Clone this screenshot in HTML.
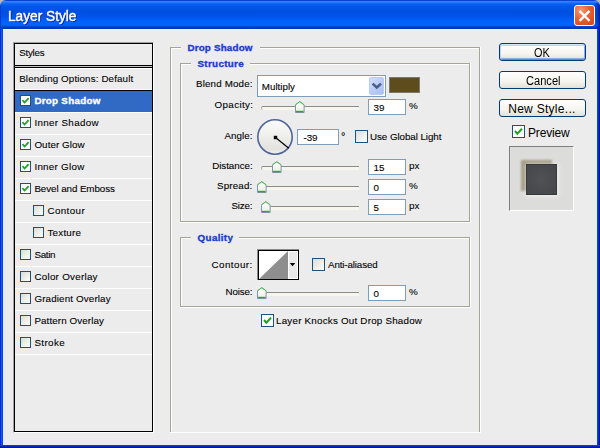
<!DOCTYPE html>
<html><head><meta charset="utf-8">
<style>
*{box-sizing:border-box;margin:0;padding:0}
html,body{width:600px;height:448px;overflow:hidden;background:#ECECEC}
body{position:relative;font-family:"Liberation Sans",sans-serif;font-size:9.8px;color:#000}
.a{position:absolute}
.t{position:absolute;white-space:pre;line-height:12px;-webkit-text-stroke:0.1px currentColor}
#titlebar{left:0;top:0;width:600px;height:29px;border-radius:6px 6px 0 0;
 background:linear-gradient(to bottom,#0B3FD6 0,#0B3FD6 1px,#3C8DFF 1px,#2A7BFF 2px,#1066F5 3.5px,#0058EA 6px,#004FE0 11px,#0052E6 16px,#005EF8 20px,#0066FF 25px,#0054E6 26px,#0040C8 27px,#0030A8 29px)}
#lframe{left:0;top:29px;width:3px;height:419px;background:linear-gradient(to right,#0024D0 0,#0024D0 1px,#0A5EFA 1px,#0A5EFA 2px,#0046EC 2px)}
#rframe{left:597px;top:29px;width:3px;height:419px;background:linear-gradient(to right,#0046F0 0,#0046F0 1px,#002CC0 1px,#002CC0 2px,#00168A 2px)}
#bframe{left:0;top:445px;width:600px;height:3px;background:linear-gradient(to bottom,#0048FF 0,#0030D8 1px,#001E98 2px,#001A80 3px)}
#close{left:574px;top:5px;width:21px;height:21px;border:1px solid #fff;border-radius:3px;
 background:radial-gradient(circle at 30% 25%,#F59A78 0,#E5602F 45%,#D4461A 100%)}
#list{left:13px;top:42px;width:141px;height:391px;border-top:1px solid #A0A0A0;border-left:1px solid #A0A0A0;border-right:1px solid #fff;border-bottom:1px solid #fff}
#listin{left:14px;top:43px;width:139px;height:389px;border:1px solid #000;background:#ECECEC}
.row{position:absolute;left:15px;width:137px;height:22px;border-bottom:1px solid #fff}
.sel{background:#316AC5;border-bottom:1px solid #fff}
.cb{position:absolute;width:11px;height:11px;border:1px solid #1C5180;background:linear-gradient(135deg,#DCDCD7 0,#F4F4F0 70%,#fff 100%)}
.cb13{width:13px;height:13px}
.chk{position:absolute;left:0;top:0}
.gl{position:absolute;background:#A5A497}
.gw{position:absolute;background:#fff}
.gt{font-weight:bold;color:#1A3CCF;-webkit-text-stroke:0.35px currentColor!important}
.fld{position:absolute;width:38px;height:16px;border:1px solid #7F9DB9;background:#fff}
.track{position:absolute;height:4px;width:98px;border-top:1px solid #8E8D85;border-left:1px solid #A9A89F;background:#F6F5EE;border-radius:3px 0 0 3px}
.btn{position:absolute;left:499px;width:87px;height:18px;border:1px solid #003C74;border-radius:3px;background:linear-gradient(#FFFFFF,#F5F4EE 60%,#E3E1D6)}
</style></head><body>
<div class="a" style="left:0;top:0;width:600px;height:8px;background:#B8B8B4"></div><div class="a" id="titlebar"></div><div class="a" style="left:594px;top:3px;width:6px;height:26px;background:linear-gradient(to right,rgba(0,40,200,0),rgba(0,45,190,0.6) 50%,#00209A);border-top-right-radius:4px"></div><div class="a" style="left:0;top:5px;width:3px;height:24px;background:linear-gradient(to right,#0A2FC0,rgba(0,80,240,0.3) 1.5px,rgba(0,80,240,0))"></div><div class="a" style="left:3px;top:29px;width:594px;height:1px;background:#F7F4EC"></div><div class="a" id="lframe"></div><div class="a" id="rframe"></div><div class="a" id="bframe"></div>
<div id="title" class="t " style="left:8.20px;top:8px;letter-spacing:0.000px;transform:scaleX(0.9776);transform-origin:0 0;font-weight:normal;font-size:14px;color:#fff;text-shadow:1px 1px 0 #0A1E8C;line-height:16px;-webkit-text-stroke:0.4px #fff">Layer Style</div>
<div class="a" id="close"><svg width="19" height="19" style="position:absolute;left:0;top:0"><path d="M5.4 5.8 L13.6 14 M13.6 5.8 L5.4 14" stroke="#fff" stroke-width="2.4" stroke-linecap="square"/></svg></div>
<div class="a" id="list"></div><div class="a" id="listin"></div>
<div class="row" style="top:44px;height:22px;border-bottom:1px solid #000"></div>
<div id="styles" class="t " style="left:19.20px;top:47px;letter-spacing:-0.240px;">Styles</div>
<div class="a" style="left:15px;top:66px;width:137px;height:1px;background:#C4C4C4"></div>
<div class="row" style="top:67px;height:24px;border-top:1px solid #000;border-bottom:1px solid #000;box-shadow:inset 0 1px 0 #fff, inset 0 -1px 0 #fff"></div>
<div id="blend" class="t " style="left:19.20px;top:73px;letter-spacing:0.119px;">Blending Options: Default</div>
<div class="row sel" style="top:91px"></div>
<div class="cb" style="left:20px;top:95px;background:#fff;"><svg class="chk" width="9" height="9" viewBox="0 0 9 9"><path d="M1.5 4.2 L3.6 6.5 L7.6 2.2" fill="none" stroke="#21A121" stroke-width="1.8"/></svg></div>
<div id="row0" class="t " style="left:34.40px;top:95px;letter-spacing:0.280px;font-weight:bold;color:#fff;-webkit-text-stroke:0.35px #fff;">Drop Shadow</div>
<div class="row" style="top:113px"></div>
<div class="cb" style="left:20px;top:117px;background:#fff;"><svg class="chk" width="9" height="9" viewBox="0 0 9 9"><path d="M1.5 4.2 L3.6 6.5 L7.6 2.2" fill="none" stroke="#21A121" stroke-width="1.8"/></svg></div>
<div id="row1" class="t " style="left:34.40px;top:117px;letter-spacing:0.339px;">Inner Shadow</div>
<div class="row" style="top:135px"></div>
<div class="cb" style="left:20px;top:139px;background:#fff;"><svg class="chk" width="9" height="9" viewBox="0 0 9 9"><path d="M1.5 4.2 L3.6 6.5 L7.6 2.2" fill="none" stroke="#21A121" stroke-width="1.8"/></svg></div>
<div id="row2" class="t " style="left:34.40px;top:139px;letter-spacing:0.083px;">Outer Glow</div>
<div class="row" style="top:157px"></div>
<div class="cb" style="left:20px;top:161px;background:#fff;"><svg class="chk" width="9" height="9" viewBox="0 0 9 9"><path d="M1.5 4.2 L3.6 6.5 L7.6 2.2" fill="none" stroke="#21A121" stroke-width="1.8"/></svg></div>
<div id="row3" class="t " style="left:34.40px;top:161px;letter-spacing:0.276px;">Inner Glow</div>
<div class="row" style="top:179px"></div>
<div class="cb" style="left:20px;top:183px;background:#fff;"><svg class="chk" width="9" height="9" viewBox="0 0 9 9"><path d="M1.5 4.2 L3.6 6.5 L7.6 2.2" fill="none" stroke="#21A121" stroke-width="1.8"/></svg></div>
<div id="row4" class="t " style="left:34.40px;top:183px;letter-spacing:-0.077px;">Bevel and Emboss</div>
<div class="row" style="top:201px"></div>
<div class="cb" style="left:33px;top:205px;"></div>
<div id="row5" class="t " style="left:47.40px;top:205px;letter-spacing:0.416px;">Contour</div>
<div class="row" style="top:223px"></div>
<div class="cb" style="left:33px;top:227px;"></div>
<div id="row6" class="t " style="left:47.40px;top:227px;letter-spacing:0.251px;">Texture</div>
<div class="row" style="top:245px"></div>
<div class="cb" style="left:20px;top:249px;"></div>
<div id="row7" class="t " style="left:34.40px;top:249px;letter-spacing:-0.300px;">Satin</div>
<div class="row" style="top:267px"></div>
<div class="cb" style="left:20px;top:271px;"></div>
<div id="row8" class="t " style="left:34.40px;top:271px;letter-spacing:0.270px;">Color Overlay</div>
<div class="row" style="top:289px"></div>
<div class="cb" style="left:20px;top:293px;"></div>
<div id="row9" class="t " style="left:34.40px;top:293px;letter-spacing:0.144px;">Gradient Overlay</div>
<div class="row" style="top:311px"></div>
<div class="cb" style="left:20px;top:315px;"></div>
<div id="row10" class="t " style="left:34.40px;top:315px;letter-spacing:0.105px;">Pattern Overlay</div>
<div class="row" style="top:333px"></div>
<div class="cb" style="left:20px;top:337px;"></div>
<div id="row11" class="t " style="left:34.40px;top:337px;letter-spacing:0.400px;">Stroke</div>
<div class="gl" style="left:170px;top:47px;width:11px;height:1px"></div>
<div class="gw" style="left:171px;top:48px;width:10px;height:1px"></div>
<div class="gl" style="left:260px;top:47px;width:220px;height:1px"></div>
<div class="gw" style="left:260px;top:48px;width:219px;height:1px"></div>
<div class="gl" style="left:170px;top:47px;width:1px;height:385px"></div>
<div class="gw" style="left:171px;top:48px;width:1px;height:383px"></div>
<div class="gl" style="left:479px;top:47px;width:1px;height:385px"></div>
<div class="gw" style="left:480px;top:47px;width:1px;height:386px"></div>
<div class="gw" style="left:170px;top:432px;width:311px;height:1px"></div>
<div class="gl" style="left:180px;top:63px;width:11px;height:1px"></div>
<div class="gw" style="left:181px;top:64px;width:10px;height:1px"></div>
<div class="gl" style="left:250px;top:63px;width:220px;height:1px"></div>
<div class="gw" style="left:250px;top:64px;width:219px;height:1px"></div>
<div class="gl" style="left:180px;top:63px;width:1px;height:159px"></div>
<div class="gw" style="left:181px;top:64px;width:1px;height:157px"></div>
<div class="gl" style="left:469px;top:63px;width:1px;height:159px"></div>
<div class="gw" style="left:470px;top:63px;width:1px;height:160px"></div>
<div class="gl" style="left:180px;top:221px;width:290px;height:1px"></div>
<div class="gw" style="left:180px;top:222px;width:291px;height:1px"></div>
<div class="gl" style="left:180px;top:237px;width:11px;height:1px"></div>
<div class="gw" style="left:181px;top:238px;width:10px;height:1px"></div>
<div class="gl" style="left:239px;top:237px;width:231px;height:1px"></div>
<div class="gw" style="left:239px;top:238px;width:230px;height:1px"></div>
<div class="gl" style="left:180px;top:237px;width:1px;height:70px"></div>
<div class="gw" style="left:181px;top:238px;width:1px;height:68px"></div>
<div class="gl" style="left:469px;top:237px;width:1px;height:70px"></div>
<div class="gw" style="left:470px;top:237px;width:1px;height:71px"></div>
<div class="gl" style="left:180px;top:306px;width:290px;height:1px"></div>
<div class="gw" style="left:180px;top:307px;width:291px;height:1px"></div>
<div id="g1" class="t gt" style="left:187.40px;top:42px;letter-spacing:0.190px;">Drop Shadow</div>
<div id="g2" class="t gt" style="left:197.50px;top:58px;letter-spacing:0.321px;">Structure</div>
<div id="g3" class="t gt" style="left:197.60px;top:232px;letter-spacing:0.348px;">Quality</div>
<div id="l1" class="t " style="left:196.00px;top:78px;letter-spacing:0.150px;">Blend Mode:</div>
<div id="l2" class="t " style="left:214.60px;top:99px;letter-spacing:0.346px;">Opacity:</div>
<div id="l3" class="t " style="left:224.40px;top:130px;letter-spacing:0.080px;">Angle:</div>
<div id="l4" class="t " style="left:212.20px;top:160px;letter-spacing:-0.050px;">Distance:</div>
<div id="l5" class="t " style="left:217.00px;top:180px;letter-spacing:0.167px;">Spread:</div>
<div id="l6" class="t " style="left:231.40px;top:200px;letter-spacing:-0.150px;">Size:</div>
<div id="l7" class="t " style="left:211.60px;top:259px;letter-spacing:0.428px;">Contour:</div>
<div id="l8" class="t " style="left:225.60px;top:286px;letter-spacing:-0.180px;">Noise:</div>
<div class="a" style="left:257px;top:75px;width:129px;height:22px;border:1px solid #7F9DB9;background:#fff"></div>
<div id="mult" class="t " style="left:261.80px;top:81px;letter-spacing:0.000px;">Multiply</div>
<div class="a" style="left:369px;top:77px;width:15px;height:18px;border-radius:2px;background:linear-gradient(135deg,#D2DEFD,#B6C9F7 60%,#A9BEF2);border:1px solid #B8CBF5"></div>
<svg class="a" style="left:372px;top:82px" width="11" height="9"><path d="M0.6 1.6 L4.8 5.5 L9 1.6" fill="none" stroke="#4A5E86" stroke-width="2.5"/></svg>
<div class="a" style="left:389px;top:77px;width:31px;height:16px;border:1px solid #7A7A70;background:#5E4C1D"></div>
<div class="fld" style="left:368px;top:99px;width:38px"></div>
<div id="fv1" class="t " style="left:373.60px;top:102px;letter-spacing:0.000px;">39</div>
<div id="fu1" class="t " style="left:409.00px;top:100px;letter-spacing:0.000px;">%</div>
<div class="fld" style="left:368px;top:159px;width:38px"></div>
<div id="fv2" class="t " style="left:373.60px;top:162px;letter-spacing:0.000px;">15</div>
<div id="fu2" class="t " style="left:409.00px;top:160px;letter-spacing:0.000px;">px</div>
<div class="fld" style="left:368px;top:179px;width:38px"></div>
<div id="fv3" class="t " style="left:373.60px;top:182px;letter-spacing:0.000px;">0</div>
<div id="fu3" class="t " style="left:409.00px;top:180px;letter-spacing:0.000px;">%</div>
<div class="fld" style="left:368px;top:199px;width:38px"></div>
<div id="fv4" class="t " style="left:373.60px;top:202px;letter-spacing:0.000px;">5</div>
<div id="fu4" class="t " style="left:409.00px;top:200px;letter-spacing:0.000px;">px</div>
<div class="fld" style="left:368px;top:285px;width:38px"></div>
<div id="fv5" class="t " style="left:373.60px;top:288px;letter-spacing:0.000px;">0</div>
<div id="fu5" class="t " style="left:409.00px;top:286px;letter-spacing:0.000px;">%</div>
<div class="fld" style="left:297px;top:129px;width:42px"></div>
<div id="fang" class="t " style="left:303.40px;top:132px;letter-spacing:0.000px;">-39</div>
<div id="deg" class="t " style="left:341.00px;top:130px;letter-spacing:0.000px;font-size:11px">°</div>
<div class="track" style="left:261px;top:106px"></div>
<div class="a" style="left:295px;top:101px;width:10px;height:12px"><svg width="10" height="12" viewBox="0 0 10 12"><defs><linearGradient id="tg" x1="0" y1="0" x2="0" y2="1"><stop offset="0" stop-color="#fff"/><stop offset="1" stop-color="#EDEDE6"/></linearGradient></defs><path d="M0.5 11.5 V3.8 L4.8 0.7 L9.1 3.8 V11.5 Z" fill="url(#tg)" stroke="#8494AC" stroke-width="1"/><path d="M0.5 3.8 L4.8 0.7 L9.1 3.8" fill="none" stroke="#4DBF4D" stroke-width="1"/><rect x="1" y="9.8" width="7.6" height="1.3" fill="#22B022"/></svg></div>
<div class="track" style="left:261px;top:166px"></div>
<div class="a" style="left:272px;top:161px;width:10px;height:12px"><svg width="10" height="12" viewBox="0 0 10 12"><defs><linearGradient id="tg" x1="0" y1="0" x2="0" y2="1"><stop offset="0" stop-color="#fff"/><stop offset="1" stop-color="#EDEDE6"/></linearGradient></defs><path d="M0.5 11.5 V3.8 L4.8 0.7 L9.1 3.8 V11.5 Z" fill="url(#tg)" stroke="#8494AC" stroke-width="1"/><path d="M0.5 3.8 L4.8 0.7 L9.1 3.8" fill="none" stroke="#4DBF4D" stroke-width="1"/><rect x="1" y="9.8" width="7.6" height="1.3" fill="#22B022"/></svg></div>
<div class="track" style="left:261px;top:186px"></div>
<div class="a" style="left:257px;top:181px;width:10px;height:12px"><svg width="10" height="12" viewBox="0 0 10 12"><defs><linearGradient id="tg" x1="0" y1="0" x2="0" y2="1"><stop offset="0" stop-color="#fff"/><stop offset="1" stop-color="#EDEDE6"/></linearGradient></defs><path d="M0.5 11.5 V3.8 L4.8 0.7 L9.1 3.8 V11.5 Z" fill="url(#tg)" stroke="#8494AC" stroke-width="1"/><path d="M0.5 3.8 L4.8 0.7 L9.1 3.8" fill="none" stroke="#4DBF4D" stroke-width="1"/><rect x="1" y="9.8" width="7.6" height="1.3" fill="#22B022"/></svg></div>
<div class="track" style="left:261px;top:206px"></div>
<div class="a" style="left:261px;top:201px;width:10px;height:12px"><svg width="10" height="12" viewBox="0 0 10 12"><defs><linearGradient id="tg" x1="0" y1="0" x2="0" y2="1"><stop offset="0" stop-color="#fff"/><stop offset="1" stop-color="#EDEDE6"/></linearGradient></defs><path d="M0.5 11.5 V3.8 L4.8 0.7 L9.1 3.8 V11.5 Z" fill="url(#tg)" stroke="#8494AC" stroke-width="1"/><path d="M0.5 3.8 L4.8 0.7 L9.1 3.8" fill="none" stroke="#4DBF4D" stroke-width="1"/><rect x="1" y="9.8" width="7.6" height="1.3" fill="#22B022"/></svg></div>
<div class="track" style="left:261px;top:292px"></div>
<div class="a" style="left:257px;top:287px;width:10px;height:12px"><svg width="10" height="12" viewBox="0 0 10 12"><defs><linearGradient id="tg" x1="0" y1="0" x2="0" y2="1"><stop offset="0" stop-color="#fff"/><stop offset="1" stop-color="#EDEDE6"/></linearGradient></defs><path d="M0.5 11.5 V3.8 L4.8 0.7 L9.1 3.8 V11.5 Z" fill="url(#tg)" stroke="#8494AC" stroke-width="1"/><path d="M0.5 3.8 L4.8 0.7 L9.1 3.8" fill="none" stroke="#4DBF4D" stroke-width="1"/><rect x="1" y="9.8" width="7.6" height="1.3" fill="#22B022"/></svg></div>
<svg class="a" style="left:256px;top:118px" width="38" height="38" viewBox="0 0 38 38"><defs><linearGradient id="cg" x1="0" y1="0" x2="0" y2="1"><stop offset="0" stop-color="#FBFBFA"/><stop offset="0.45" stop-color="#EFEFEC"/><stop offset="0.85" stop-color="#E3E2DE"/><stop offset="1" stop-color="#F2F2F0"/></linearGradient></defs><circle cx="19" cy="19" r="17.2" fill="url(#cg)" stroke="#4F6499" stroke-width="1.6"/><rect x="17.8" y="17.8" width="3.4" height="3.4" fill="#000"/><path d="M19.5 19.5 L32.8 30.3" stroke="#000" stroke-width="1.2"/></svg>
<div class="cb cb13" style="left:355px;top:130px"></div>
<div id="ugl" class="t " style="left:370.00px;top:131px;letter-spacing:-0.067px;">Use Global Light</div>
<div class="a" style="left:257px;top:249px;width:42px;height:31px;background:#000;box-shadow:inset 1px 1px 0 #8A8A8A"></div>
<svg class="a" style="left:259px;top:251px" width="29" height="28"><path d="M0 0 H29 V28 H0 Z" fill="#fff"/><path d="M0 28 L29 0 V28 Z" fill="#8E8E8E"/></svg>
<div class="a" style="left:288px;top:251px;width:10px;height:28px;background:#E9E9E9;border:1px solid #fff"></div>
<svg class="a" style="left:289px;top:263px" width="8" height="4"><path d="M0.8 0 H6.2 L3.5 3.2 Z" fill="#000"/></svg>
<div class="cb cb13" style="left:312px;top:258px"></div>
<div id="aa" class="t " style="left:328.00px;top:259px;letter-spacing:-0.136px;">Anti-aliased</div>
<div class="cb cb13" style="left:261px;top:314px;background:#fff"><svg class="chk" width="11" height="11" viewBox="0 0 11 11"><path d="M2 5 L4.3 7.7 L9 2.8" fill="none" stroke="#21A121" stroke-width="2"/></svg></div>
<div id="lko" class="t " style="left:276.00px;top:315px;letter-spacing:0.222px;">Layer Knocks Out Drop Shadow</div>
<div class="btn" style="top:43px;box-shadow:inset 0 1px 0 #CEE7FF,inset 1px 0 0 #BCD4F6,inset -1px 0 0 #89ADE4,inset 0 -1px 0 #6982EE,inset 0 2px 0 #BCD4F6,inset 0 -2px 0 #89ADE4"></div>
<div class="btn" style="top:71px"></div>
<div class="btn" style="top:99px"></div>
<div id="ok" class="t " style="left:534.20px;top:46px;letter-spacing:0.000px;transform:scaleX(0.9104);transform-origin:0 0;font-size:12px;line-height:14px;-webkit-text-stroke:0">OK</div>
<div id="cancel" class="t " style="left:525.80px;top:74px;letter-spacing:0.000px;transform:scaleX(0.9249);transform-origin:0 0;font-size:12px;line-height:14px;-webkit-text-stroke:0">Cancel</div>
<div id="news" class="t " style="left:508.20px;top:102px;letter-spacing:0.286px;font-size:12px;line-height:14px;-webkit-text-stroke:0">New Style...</div>
<div class="cb cb13" style="left:512px;top:125px;background:#fff"><svg class="chk" width="11" height="11" viewBox="0 0 11 11"><path d="M2 5 L4.3 7.7 L9 2.8" fill="none" stroke="#21A121" stroke-width="2"/></svg></div>
<div id="prev" class="t " style="left:528.00px;top:126px;letter-spacing:-0.167px;font-size:12px;line-height:14px;-webkit-text-stroke:0">Preview</div>
<div class="a" style="left:509px;top:146px;width:65px;height:65px;border-top:1px solid #808080;border-left:1px solid #808080;border-right:1px solid #fff;border-bottom:1px solid #fff;background:#DCDCDA"></div>
<div class="a" style="left:519px;top:158px;width:40px;height:40px;background:radial-gradient(closest-side,rgba(255,255,255,0.55),rgba(255,255,255,0))"></div>
<div class="a" style="left:521px;top:160px;width:31px;height:31px;background:#A39C86;filter:blur(0.8px)"></div>
<div class="a" style="left:526px;top:164px;width:31px;height:31px;background:radial-gradient(circle,#505255 0,#4A4C4F 45%,#45474A 100%);border:1px solid #38393C;box-shadow:1px 1px 4px 1px rgba(240,240,240,0.8)"></div>
</body></html>
